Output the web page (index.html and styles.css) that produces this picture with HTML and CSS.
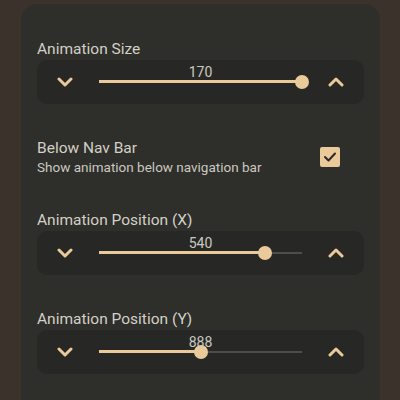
FILE: index.html
```html
<!DOCTYPE html>
<html lang="en">
<head>
    <meta charset="UTF-8">
    <meta name="viewport" content="width=device-width, initial-scale=1.0">
    <title>Animation Settings</title>
    <link rel="stylesheet" href="styles.css">
</head>
<body>
    <div class="card">
        <div class="setting">
            <div class="label">Animation Size</div>
            <div class="stepper">
                <button class="step">
                    <svg width="16" height="10" viewBox="0 0 16 10"><polyline points="2,2 8,8 14,2"/></svg>
                </button>
                <div class="slider">
                    <span class="value">170</span>
                    <div class="track">
                        <div class="fill" style="width: 100%;"></div>
                        <div class="thumb" style="left: 100%;"></div>
                    </div>
                </div>
                <button class="step">
                    <svg width="16" height="10" viewBox="0 0 16 10"><polyline points="2,8 8,2 14,8"/></svg>
                </button>
            </div>
        </div>

        <div class="toggle-row">
            <div class="toggle-text">
                <div class="title">Below Nav Bar</div>
                <div class="subtitle">Show animation below navigation bar</div>
            </div>
            <div class="checkbox">
                <svg width="14" height="12" viewBox="0 0 14 12"><polyline points="2,6 5.5,9.5 12,2.5"/></svg>
            </div>
        </div>

        <div class="setting">
            <div class="label">Animation Position (X)</div>
            <div class="stepper">
                <button class="step">
                    <svg width="16" height="10" viewBox="0 0 16 10"><polyline points="2,2 8,8 14,2"/></svg>
                </button>
                <div class="slider">
                    <span class="value">540</span>
                    <div class="track">
                        <div class="fill" style="width: 82%;"></div>
                        <div class="thumb" style="left: 82%;"></div>
                    </div>
                </div>
                <button class="step">
                    <svg width="16" height="10" viewBox="0 0 16 10"><polyline points="2,8 8,2 14,8"/></svg>
                </button>
            </div>
        </div>

        <div class="setting">
            <div class="label">Animation Position (Y)</div>
            <div class="stepper">
                <button class="step">
                    <svg width="16" height="10" viewBox="0 0 16 10"><polyline points="2,2 8,8 14,2"/></svg>
                </button>
                <div class="slider">
                    <span class="value">888</span>
                    <div class="track">
                        <div class="fill" style="width: 50%;"></div>
                        <div class="thumb" style="left: 50%;"></div>
                    </div>
                </div>
                <button class="step">
                    <svg width="16" height="10" viewBox="0 0 16 10"><polyline points="2,8 8,2 14,8"/></svg>
                </button>
            </div>
        </div>
    </div>
</body>
</html>
```

FILE: styles.css
```css
:root {
    --page-bg: #3a322b;
    --card-bg: #2e2e2a;
    --row-bg: #272825;
    --accent: #eac99b;
    --text: #d3d0c7;
    --text-dim: #cbc8c0;
    --track-off: #4d4d49;
}

body {
    margin: 0;
    background: var(--page-bg);
    font-family: Roboto, "Noto Sans", sans-serif;
    color: var(--text);
    height: 400px;
    overflow: hidden;
}

.card {
    margin: 4px 20px 0 21px;
    background: var(--card-bg);
    border-radius: 16px;
    padding: 35px 16px 40px 16px;
    display: flex;
    flex-direction: column;
    gap: 34px;
}

.label {
    font-size: 15.5px;
    line-height: 20px;
    margin-bottom: 1px;
}

.stepper {
    display: flex;
    align-items: center;
    gap: 6px;
    height: 44px;
    background: var(--row-bg);
    border-radius: 10px;
}

.step {
    width: 56px;
    height: 44px;
    background: none;
    border: none;
    padding: 0;
    display: flex;
    align-items: center;
    justify-content: center;
}

.step svg polyline {
    fill: none;
    stroke: var(--accent);
    stroke-width: 3;
    stroke-linecap: round;
    stroke-linejoin: round;
}

.slider {
    flex: 1;
    position: relative;
    height: 44px;
    display: flex;
    align-items: center;
}

.value {
    position: absolute;
    left: 0;
    right: 0;
    top: 3px;
    text-align: center;
    font-size: 14px;
    line-height: 18px;
    color: var(--text-dim);
    z-index: 1;
}

.track {
    position: relative;
    width: 100%;
    height: 2px;
    background: var(--track-off);
    margin-top: -1px;
}

.fill {
    height: 3px;
    margin-top: -0.5px;
    background: var(--accent);
}

.thumb {
    position: absolute;
    top: 50%;
    width: 14px;
    height: 14px;
    margin: -7px 0 0 -7px;
    border-radius: 50%;
    background: var(--accent);
}

.toggle-row {
    display: flex;
    align-items: center;
    justify-content: space-between;
    padding-right: 24px;
}

.title {
    font-size: 15.5px;
    line-height: 20px;
}

.subtitle {
    font-size: 13.5px;
    line-height: 18px;
    color: var(--text-dim);
}

.checkbox {
    width: 20px;
    height: 20px;
    border-radius: 2px;
    background: var(--accent);
    display: flex;
    align-items: center;
    justify-content: center;
}

.checkbox svg polyline {
    fill: none;
    stroke: #2b2a27;
    stroke-width: 2;
    stroke-linecap: round;
    stroke-linejoin: round;
}
```
